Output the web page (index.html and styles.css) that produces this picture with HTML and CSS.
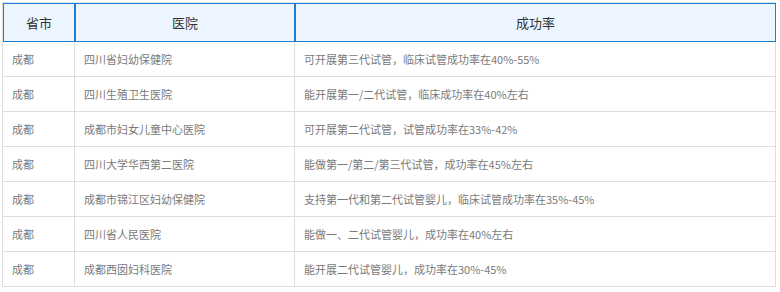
FILE: index.html
```html
<!DOCTYPE html>
<html lang="zh-CN">
<head>
<meta charset="utf-8">
<link rel="stylesheet" href="styles.css">
</head>
<body>
<table class="tbl">
  <colgroup>
    <col class="c1">
    <col class="c2">
    <col class="c3">
  </colgroup>
  <thead>
    <tr><th>省市</th><th>医院</th><th>成功率</th></tr>
  </thead>
  <tbody>
    <tr><td>成都</td><td>四川省妇幼保健院</td><td>可开展第三代试管，临床试管成功率在40%-55%</td></tr>
    <tr><td>成都</td><td>四川生殖卫生医院</td><td>能开展第一/二代试管，临床成功率在40%左右</td></tr>
    <tr><td>成都</td><td>成都市妇女儿童中心医院</td><td>可开展第二代试管，试管成功率在33%-42%</td></tr>
    <tr><td>成都</td><td>四川大学华西第二医院</td><td>能做第一/第二/第三代试管，成功率在45%左右</td></tr>
    <tr><td>成都</td><td>成都市锦江区妇幼保健院</td><td>支持第一代和第二代试管婴儿，临床试管成功率在35%-45%</td></tr>
    <tr><td>成都</td><td>四川省人民医院</td><td>能做一、二代试管婴儿，成功率在40%左右</td></tr>
    <tr><td>成都</td><td>成都西囡妇科医院</td><td>能开展二代试管婴儿，成功率在30%-45%</td></tr>
  </tbody>
</table>
</body>
</html>
```
FILE: styles.css
```css
html, body {
  margin: 0;
  padding: 0;
  background: #fff;
}
body {
  padding: 2px 0 0 2px;
  font-family: "Microsoft YaHei", "Noto Sans CJK SC", "Noto Sans", sans-serif;
}
.tbl {
  border-collapse: separate;
  border-spacing: 0;
  table-layout: fixed;
  width: 774px;
  border-top: 1px solid #d6e4f0;
  border-left: 1px solid #dddddd;
}
.c1 { width: 72px; }
.c2 { width: 220px; }
.c3 { width: 481px; }
.tbl th {
  box-sizing: border-box;
  height: 39px;
  background: #edf6ff;
  border: 1px solid #1e7fd2;
  color: #333;
  font-size: 13px;
  font-weight: normal;
  text-align: center;
  padding: 0;
}
.tbl td {
  box-sizing: border-box;
  height: 35px;
  border-right: 1px solid #dddddd;
  border-bottom: 1px solid #dddddd;
  color: #7a7a7a;
  font-size: 11px;
  padding: 0 0 0 9px;
  white-space: nowrap;
}
.tbl td:nth-child(n+2) {
  padding-left: 9px;
}
```
